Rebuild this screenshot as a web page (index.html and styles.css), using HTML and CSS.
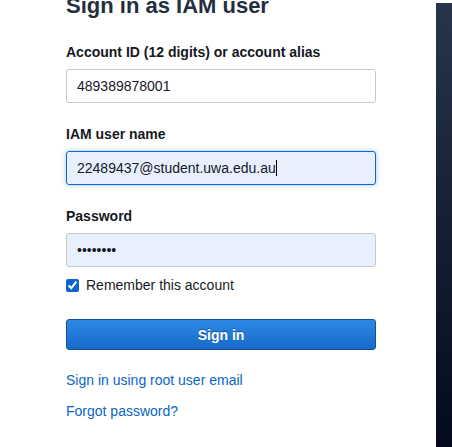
FILE: index.html
```html
<!DOCTYPE html>
<html lang="en">
<head>
<meta charset="utf-8">
<title>Sign in as IAM user</title>
<link rel="stylesheet" href="styles.css">
</head>
<body>
<div class="page">
  <main class="signin">
    <h1 class="title">Sign in as IAM user</h1>
    <div class="field">
      <label class="label" for="account">Account ID (12 digits) or account alias</label>
      <input class="input" id="account" type="text" value="489389878001">
    </div>
    <div class="field">
      <label class="label" for="user">IAM user name</label>
      <div class="input-wrap">
        <input class="input input-focus" id="user" type="text" value="22489437@student.uwa.edu.au">
        <span class="caret"></span>
      </div>
    </div>
    <div class="field field-last">
      <label class="label" for="pw">Password</label>
      <input class="input input-filled" id="pw" type="password" value="abcdefgh">
    </div>
    <label class="remember"><input class="check" type="checkbox" checked> Remember this account</label>
    <button class="btn" type="button">Sign in</button>
    <a class="link" href="#">Sign in using root user email</a>
    <a class="link" href="#">Forgot password?</a>
  </main>
  <aside class="side"></aside>
</div>
</body>
</html>
```
FILE: styles.css
```css
html, body {
  margin: 0;
  padding: 0;
  background: #ffffff;
  height: 100%;
  overflow: hidden;
}
body {
  font-family: "Liberation Sans", Arial, sans-serif;
  color: #16191f;
}
.page {
  display: flex;
  justify-content: space-between;
  height: 447px;
}
.signin {
  margin-left: 66px;
  margin-top: -7px;
  width: 310px;
  display: flex;
  flex-direction: column;
}
.title {
  font-size: 22px;
  line-height: 26px;
  font-weight: bold;
  margin: 0 0 23px 0;
  color: #232f3e;
}
.field {
  display: flex;
  flex-direction: column;
  margin-bottom: 21px;
}
.field-last {
  margin-bottom: 10px;
}
.label {
  font-size: 14px;
  line-height: 20px;
  font-weight: bold;
  margin-bottom: 7px;
}
.input {
  box-sizing: border-box;
  width: 310px;
  height: 34px;
  border: 1px solid #c6c9cc;
  border-radius: 3px;
  padding: 0 10px;
  font-family: "Liberation Sans", Arial, sans-serif;
  font-size: 14px;
  color: #16191f;
  background: #ffffff;
  outline: none;
  margin: 0;
}
.input-wrap {
  position: relative;
  display: flex;
}
.input-focus {
  background: #e8f0fe;
  border-color: #0b68d8;
  box-shadow: 0 0 5px rgba(36, 120, 230, 0.45);
}
.caret {
  position: absolute;
  left: 210px;
  top: 9px;
  width: 1px;
  height: 16px;
  background: #000000;
}
.input-filled {
  background: #e8f0fe;
}
.remember {
  display: flex;
  align-items: center;
  font-size: 14px;
  line-height: 16px;
  color: #16191f;
  height: 16px;
  margin-bottom: 26px;
}
.check {
  width: 13px;
  height: 13px;
  margin: 0 7px 0 0;
  accent-color: #0b66cf;
}
.btn {
  box-sizing: border-box;
  width: 310px;
  height: 31px;
  border: 1px solid #174f96;
  border-radius: 3px;
  background: linear-gradient(#2c89e4, #1869c9);
  color: #ffffff;
  font-family: "Liberation Sans", Arial, sans-serif;
  font-size: 14px;
  font-weight: bold;
  text-shadow: 0 -1px 0 rgba(0, 0, 0, 0.35);
  padding: 0;
  margin-bottom: 20px;
}
.link {
  font-size: 14px;
  line-height: 20px;
  color: #0a66c6;
  text-decoration: none;
  align-self: flex-start;
  margin-bottom: 11px;
}
.side {
  width: 16px;
  margin-top: 3px;
  height: 444px;
  background: linear-gradient(#283549, #040a1b);
}
```
